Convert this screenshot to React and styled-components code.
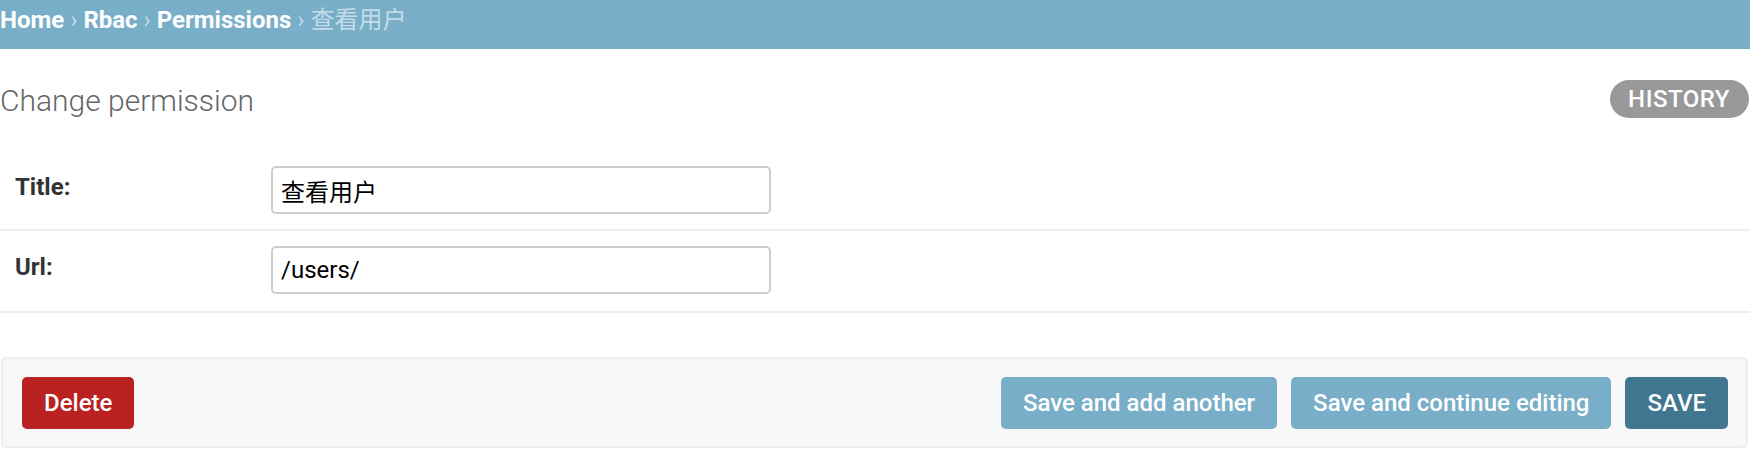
import React from 'react'
import styled, { createGlobalStyle } from 'styled-components'

const GlobalStyle = createGlobalStyle`
  html, body {
    margin: 0;
    padding: 0;
    background: #fff;
  }
  body {
    font-family: Roboto, "Noto Sans CJK SC", "DejaVu Sans", sans-serif;
    color: #333;
  }
  * {
    box-sizing: border-box;
  }
`;

const Breadcrumbs = styled.div`
  background: #79aec8;
  height: 49px;
  padding: 6px 0 15px;
  font-size: 24px;
  line-height: 28px;
  color: #c4dce8;
  white-space: nowrap;

  & a {
    color: #fff;
    font-weight: 700;
    text-decoration: none;
  }
`;

const Header = styled.div`
  display: flex;
  justify-content: space-between;
  align-items: flex-start;
  padding: 31px 1px 0 0;
`;

const Title = styled.h1`
  margin: 3px 0 0;
  font-size: 30px;
  font-weight: 300;
  color: #666;
  line-height: 35px;
`;

const HistoryLink = styled.a`
  display: block;
  height: 38px;
  line-height: 38px;
  padding: 0 19px 0 18px;
  border-radius: 19px;
  background: #999;
  color: #fff;
  font-size: 24px;
  font-weight: 500;
  letter-spacing: 0.5px;
  text-transform: uppercase;
  text-decoration: none;
`;

const Fieldset = styled.fieldset`
  margin: 33px 0 0;
  padding: 0;
  border: none;
`;

const FormRow = styled.div`
  display: flex;
  align-items: flex-start;
  padding: 15px 15px ${p => p.$last ? 17 : 15}px;
  border-bottom: 2px solid #eee;
`;

const Label = styled.label`
  flex: 0 0 256px;
  padding-top: 7px;
  font-size: 24px;
  font-weight: 700;
  color: #333;
`;

const TextInput = styled.input`
  width: 500px;
  height: 48px;
  padding: 0 8px;
  border: 2px solid #ccc;
  border-radius: 5px;
  font-family: Roboto, "Noto Sans CJK SC", sans-serif;
  font-size: 24px;
  color: #000;
  background: #fff;
  outline: none;
`;

const SubmitRow = styled.div`
  display: flex;
  align-items: center;
  gap: 14px;
  margin: 44px 2px 0 1px;
  padding: 18px 18px 17px 19px;
  background: #f8f8f8;
  border: 2px solid #eee;
  border-radius: 5px;
`;

const Button = styled.button`
  height: 52px;
  padding: 0 22px;
  border: none;
  border-radius: 5px;
  background: ${p => p.$bg};
  color: #fff;
  font-family: Roboto, sans-serif;
  font-size: 24px;
  font-weight: 500;
  cursor: pointer;

  &:first-child {
    margin-right: auto;
  }
`;

export default function App() {
  return (
    <>
      <GlobalStyle />
      <Breadcrumbs>
        <a href="#">Home</a> › <a href="#">Rbac</a> › <a href="#">Permissions</a> › 查看用户
      </Breadcrumbs>
      <Header>
        <Title>Change permission</Title>
        <HistoryLink href="#">History</HistoryLink>
      </Header>
      <form>
        <Fieldset>
          <FormRow>
            <Label>Title:</Label>
            <TextInput defaultValue="查看用户" />
          </FormRow>
          <FormRow $last>
            <Label>Url:</Label>
            <TextInput defaultValue="/users/" />
          </FormRow>
        </Fieldset>
        <SubmitRow>
          <Button type="button" $bg="#ba2121">Delete</Button>
          <Button type="button" $bg="#79aec8">Save and add another</Button>
          <Button type="button" $bg="#79aec8">Save and continue editing</Button>
          <Button type="button" $bg="#417690">SAVE</Button>
        </SubmitRow>
      </form>
    </>
  )
}
